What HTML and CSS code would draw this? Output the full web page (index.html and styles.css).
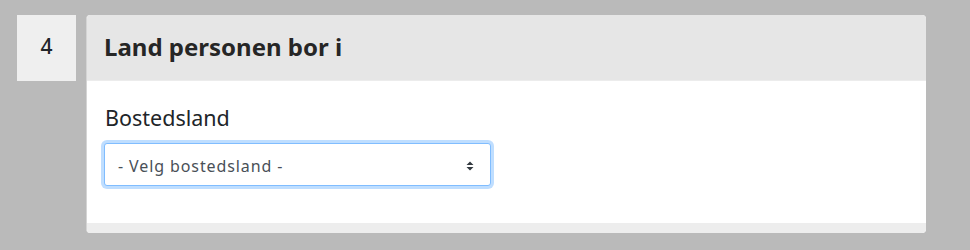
FILE: index.html
```html
<!DOCTYPE html>
<html lang="no">
<head>
<meta charset="utf-8">
<link rel="stylesheet" href="styles.css">
</head>
<body>
<div class="page">
  <div class="step">
    <div class="step-num">4</div>
    <div class="card">
      <div class="card-header">Land personen bor i</div>
      <div class="card-body">
        <label class="label" for="land">Bostedsland</label>
        <div class="select" id="land">
          <span class="select-text">- Velg bostedsland -</span>
          <svg class="select-arrows" width="8" height="10" viewBox="0 0 8 10"><path d="M4 0.5 L7.5 4 L0.5 4 Z M4 9.5 L7.5 6 L0.5 6 Z" fill="#343a40"/></svg>
        </div>
      </div>
      <div class="card-footer"></div>
    </div>
  </div>
</div>
</body>
</html>
```
FILE: styles.css
```css
html, body {
  margin: 0;
  padding: 0;
  background: #bababa;
  font-family: "Noto Sans", "Open Sans", sans-serif;
  color: #212529;
}
.page {
  padding: 15px 44px 0 17px;
}
.step {
  display: flex;
  align-items: flex-start;
  gap: 10px;
}
.step-num {
  width: 59px;
  height: 66px;
  flex: none;
  box-sizing: border-box;
  padding-bottom: 5px;
  background: #efefef;
  display: flex;
  align-items: center;
  justify-content: center;
  font-size: 21px;
  font-weight: 500;
  color: #212529;
}
.card {
  flex: 1;
  background: #fff;
  border-radius: 4px;
  overflow: hidden;
  border-left: 1px solid #d4d4d4;
  display: flex;
  flex-direction: column;
}
.card-header {
  height: 66px;
  box-sizing: border-box;
  background: #e6e6e6;
  border-bottom: 1px solid #ececec;
  padding: 0 0 3px 17px;
  display: flex;
  align-items: center;
  font-size: 24px;
  font-weight: 700;
  color: #262626;
}
.card-body {
  height: 142px;
  box-sizing: border-box;
  padding: 23px 0 0 18px;
}
.label {
  display: block;
  font-size: 21.5px;
  line-height: 28px;
  color: #212529;
  margin-bottom: 11px;
}
.select {
  width: 387px;
  height: 43px;
  box-sizing: border-box;
  border: 1px solid #80bdff;
  border-radius: 3px;
  box-shadow: 0 0 0 3px rgba(0, 123, 255, 0.25);
  margin-left: -1px;
  display: flex;
  align-items: center;
  justify-content: space-between;
  padding: 2px 16px 0 13px;
  background: #fff;
}
.select-text {
  font-size: 16px;
  letter-spacing: 0.9px;
  color: #495057;
}
.select-arrows {
  display: block;
}
.card-footer {
  height: 10px;
  background: #ededed;
}
```
